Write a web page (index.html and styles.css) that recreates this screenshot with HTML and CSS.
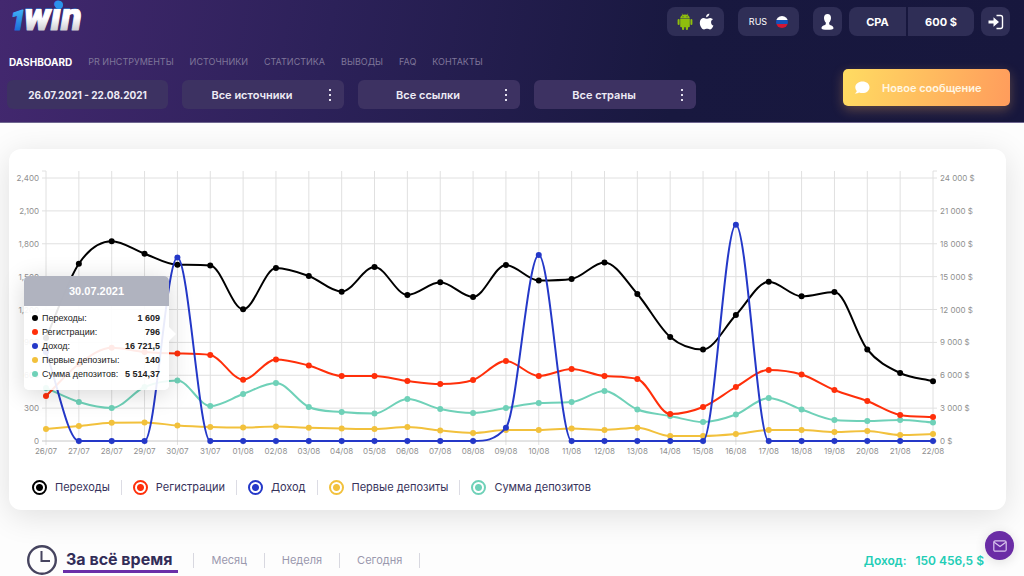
FILE: index.html
```html
<!DOCTYPE html>
<html lang="ru">
<head>
<meta charset="utf-8">
<meta name="viewport" content="width=device-width, initial-scale=1">
<title>1win Dashboard</title>
<link rel="stylesheet" href="styles.css">
</head>
<body>
<header class="header">
  <div class="header-row">
    <a class="logo" href="#" aria-label="1win">
      <svg width="80" height="36" viewBox="0 0 80 36">
        <defs>
          <linearGradient id="blue" gradientUnits="userSpaceOnUse" x1="0" y1="10" x2="0" y2="30"><stop offset="0" stop-color="#3fb0f7"/><stop offset="1" stop-color="#1b6fd8"/></linearGradient>
          <linearGradient id="white" gradientUnits="userSpaceOnUse" x1="0" y1="0" x2="0" y2="30"><stop offset=".29" stop-color="#2b93ea"/><stop offset=".29" stop-color="#ffffff"/><stop offset=".6" stop-color="#ffffff"/><stop offset="1" stop-color="#cfcfd4"/></linearGradient>
        </defs>
        <text class="logo-text" x="1" y="30" font-size="28" fill="url(#blue)" stroke="url(#blue)">1</text>
        <text class="logo-text" x="15" y="30" font-size="38" fill="url(#white)" stroke="url(#white)">win</text>
        <circle cx="50" cy="5" r="4" fill="#2b93ea"/>
      </svg>
    </a>
    <div class="tools">
      <button class="tool apps" aria-label="Приложения">
        <svg width="16" height="18" viewBox="0 0 16 18" fill="#8fbf0c"><path d="M3.2 6h9.6v7.2a1 1 0 0 1-1 1H4.200a1 1 0 0 1-1-1z"/><path d="M3.200 5.400C3.300 3.600 4.400 2.500 5.500 2L4.700.6l.4-.2.9 1.400a5.600 5.600 0 0 1 4 0L10.900.4l.4.2-.8 1.400c1.100.5 2.200 1.600 2.300 3.400z"/><rect x=".6" y="6" width="2" height="6" rx="1"/><rect x="13.400" y="6" width="2" height="6" rx="1"/><rect x="5" y="12" width="2.200" height="5" rx="1.100"/><rect x="8.800" y="12" width="2.200" height="5" rx="1.100"/><circle cx="6" cy="3.800" r=".5" fill="#2f2f57"/><circle cx="10" cy="3.800" r=".5" fill="#2f2f57"/></svg>
        <svg width="15" height="18" viewBox="0 0 15 18" fill="#fff"><path d="M10.300.4c.1 1-.3 2-.9 2.700-.6.7-1.500 1.200-2.300 1.100-.1-1 .3-1.900.9-2.600C8.600.9 9.600.5 10.300.4zM13.900 6.300c-1.300.8-1.900 1.800-1.800 3.100 0 1.500.9 2.600 2.300 3.200-.5 1.400-1.700 3.800-3.200 3.900-1.200.1-1.600-.7-3.100-.7s-1.900.7-3.100.7C3 16.400.8 13 .8 9.700.8 6.600 2.700 4.900 4.700 4.900c1.200 0 2.300.8 3.100.8.700 0 2-.9 3.500-.8 1 .1 1.900.5 2.600 1.400z"/></svg>
      </button>
      <button class="tool lang">RUS
        <svg width="12" height="12" viewBox="0 0 12 12"><clipPath id="flag"><circle cx="6" cy="6" r="6"/></clipPath><g clip-path="url(#flag)"><path fill="#fff" d="M0 0h12v4H0z"/><path fill="#1553b8" d="M0 4h12v4H0z"/><path fill="#d41632" d="M0 8h12v4H0z"/></g></svg>
      </button>
      <button class="tool icon" aria-label="Профиль">
        <svg width="13" height="16" viewBox="0 0 13 16" fill="#fff"><path d="M6.500 0C4.300 0 3 1.600 3 4c0 1.800.8 3.600 1.800 4.500v1.700C4.400 11.200.5 11.200.5 14.200c0 1 2.500 1.600 6 1.600s6-.6 6-1.600c0-3-3.900-3-4.300-4V8.500C9.200 7.600 10 5.800 10 4c0-2.400-1.300-4-3.500-4z"/></svg>
      </button>
      <div class="pair"><button class="tool cpa">CPA</button><button class="tool balance">600 $</button></div>
      <button class="tool icon" aria-label="Выйти">
        <svg width="16" height="16" viewBox="0 0 16 16"><path d="M8.500 1.500h4a2 2 0 0 1 2 2v9a2 2 0 0 1-2 2h-4" fill="none" stroke="#fff" stroke-width="1.400"/><path d="M.5 6.500h5V3.300L11 8l-5.500 4.700V9.500h-5z" fill="#fff"/></svg>
      </button>
    </div>
  </div>
  <div class="header-row lower">
    <div>
      <nav class="nav">
        <a class="nav-link active" href="#">DASHBOARD</a>
        <a class="nav-link" href="#">PR ИНСТРУМЕНТЫ</a>
        <a class="nav-link" href="#">ИСТОЧНИКИ</a>
        <a class="nav-link" href="#">СТАТИСТИКА</a>
        <a class="nav-link" href="#">ВЫВОДЫ</a>
        <a class="nav-link" href="#">FAQ</a>
        <a class="nav-link" href="#">КОНТАКТЫ</a>
      </nav>
      <div class="filters">
        <input class="field date" type="text" value="26.07.2021 - 22.08.2021" aria-label="Период">
        <label class="picker"><select class="field" aria-label="Источники"><option>Все источники</option></select><span class="dots"></span></label>
        <label class="picker"><select class="field" aria-label="Ссылки"><option>Все ссылки</option></select><span class="dots"></span></label>
        <label class="picker"><select class="field" aria-label="Страны"><option>Все страны</option></select><span class="dots"></span></label>
      </div>
    </div>
    <button class="message">
      <svg width="16" height="14" viewBox="0 0 16 14"><path d="M8.500.5C4.500.5 1.300 3 1.300 6.200c0 1.500.6 2.700 1.500 3.700-.3 1-1.100 1.900-2.100 2.600 1.600.2 3.200-.3 4.400-1 1 .4 2.200.6 3.400.6 4 0 7-2.600 7-5.900S12.500.5 8.500.5z" fill="#fff"/></svg>
      <span>Новое сообщение</span>
    </button>
  </div>
</header>

<main class="main">
  <section class="card">
    <div class="chart-box">
      <svg class="chart" id="chart" viewBox="0 0 997 316" role="img" aria-label="Статистика по дням"></svg>
      <div class="tooltip">
        <div class="tooltip-title">30.07.2021</div>
        <dl class="tooltip-list">
          <div class="tooltip-row black"><dt>Переходы:</dt><dd>1 609</dd></div>
          <div class="tooltip-row red"><dt>Регистрации:</dt><dd>796</dd></div>
          <div class="tooltip-row blue"><dt>Доход:</dt><dd>16 721,5</dd></div>
          <div class="tooltip-row yellow"><dt>Первые депозиты:</dt><dd>140</dd></div>
          <div class="tooltip-row teal"><dt>Сумма депозитов:</dt><dd>5 514,37</dd></div>
        </dl>
      </div>
    </div>
    <div class="legend">
      <label class="legend-item black"><input type="checkbox" checked>Переходы</label>
      <label class="legend-item red"><input type="checkbox" checked>Регистрации</label>
      <label class="legend-item blue"><input type="checkbox" checked>Доход</label>
      <label class="legend-item yellow"><input type="checkbox" checked>Первые депозиты</label>
      <label class="legend-item teal"><input type="checkbox" checked>Сумма депозитов</label>
    </div>
  </section>

  <section class="summary">
    <svg class="clock" width="30" height="30" viewBox="0 0 30 30" fill="none" stroke="#46445f"><circle cx="15" cy="15" r="13.800" stroke-width="2.400"/><path d="M14.500 6v10h8.500" stroke-width="2"/></svg>
    <div class="periods">
      <button class="period current">За всё время</button>
      <button class="period">Месяц</button>
      <button class="period">Неделя</button>
      <button class="period">Сегодня</button>
    </div>
    <p class="income"><span>Доход:</span><span>150 456,5 $</span></p>
  </section>
</main>

<button class="mail" aria-label="Написать">
  <svg width="14" height="12" viewBox="0 0 14 12" fill="none" stroke="#d9c5ee" stroke-width="1.200"><rect x=".8" y=".8" width="12.400" height="10.400" rx="1.500"/><path d="M1.200 2.200 7 6.600l5.800-4.400"/></svg>
</button>
<script src="chart.js"></script>
</body>
</html>
```

FILE: styles.css
```css
* { box-sizing: border-box; }

body {
  margin: 0;
  background: #fdfdfd;
  color: #37335c;
  font-family: Inter, "Open Sans", sans-serif;
  font-size: 11px;
}

button, input, select { font: inherit; color: inherit; border: 0; margin: 0; padding: 0; background: none; }
a { color: inherit; text-decoration: none; }
svg { display: block; flex: none; }

.black { --tone: #000000; }
.red { --tone: #ff2f0a; }
.blue { --tone: #2438c8; }
.yellow { --tone: #f2c13c; }
.teal { --tone: #6fd1b8; }

.header {
  padding: 0 14px 13px 7px;
  color: #fff;
  background: linear-gradient(100deg, #43286f 0%, #2c2159 32%, #18183f 66%, #17173d 100%);
  border-bottom: 1px solid #6f6790;
}
.header-row { display: flex; justify-content: space-between; }
.header-row.lower { align-items: flex-end; margin-top: 19px; }
.logo { margin-left: 2px; }
.logo svg { overflow: visible; }
.logo-text {
  font-family: Roboto, sans-serif;
  font-weight: 900;
  font-style: italic;
  stroke-width: 1px;
  stroke-linejoin: round;
}

.nav { display: flex; gap: 16px; margin: 0 0 11px 2px; line-height: 14px; font-size: 9px; }
.nav-link { color: #7f7699; }
.nav-link.active { color: #fff; font-size: 10px; font-weight: 700; }

.filters { display: flex; gap: 14px; }
.field {
  width: 162px;
  height: 29px;
  border-radius: 6px;
  background: #3d3262;
  color: #eeebf5;
  font-weight: 600;
  text-align: center;
  text-align-last: center;
  appearance: none;
}
.date { width: 161px; font-size: 10px; font-weight: 700; }
.picker { position: relative; }
.picker .field { display: block; padding-right: 22px; }
.dots {
  position: absolute;
  right: 13px;
  top: 9px;
  width: 2px;
  height: 2px;
  background: #e4e0ee;
  box-shadow: 0 5px #e4e0ee, 0 10px #e4e0ee;
}

.tools { display: flex; padding-top: 7px; }
.tool {
  display: flex;
  align-items: center;
  justify-content: center;
  height: 29px;
  border-radius: 8px;
  background: #2f2e56;
  font-weight: 700;
}
.apps { width: 57px; gap: 6px; margin-right: 14px; }
.lang { width: 61px; gap: 9px; margin-right: 14px; font-size: 9px; font-weight: 400; }
.icon { width: 29px; }
.pair { display: flex; gap: 2px; margin: 0 7px; }
.cpa { width: 57px; border-radius: 8px 0 0 8px; }
.balance { width: 66px; border-radius: 0 8px 8px 0; }
.message {
  display: flex;
  align-items: center;
  gap: 12px;
  width: 167px;
  height: 37px;
  margin-bottom: 3px;
  padding-left: 11px;
  border-radius: 5px;
  color: #fff6e2;
  font-weight: 600;
  background: linear-gradient(100deg, #ffdc62, #ff9c5c);
  box-shadow: 0 4px 12px rgba(255, 180, 90, .3);
}

.main { padding: 26px 18px 0 9px; }
.card {
  border-radius: 12px;
  background: #fff;
  box-shadow: 0 6px 32px rgba(0, 0, 0, .12);
}
.chart-box { position: relative; }
.chart { width: 100%; }
.chart text { fill: #8f8f8f; font-size: 8px; }
.grid { stroke: #e0e0e0; fill: none; }
.base { stroke: #c8c8c8; }
.line { fill: none; stroke: var(--tone); stroke-width: 2; }
.dot { fill: var(--tone); }

.tooltip {
  position: absolute;
  left: 15px;
  top: 127px;
  width: 145px;
  border-radius: 5px;
  background: rgba(255, 255, 255, .9);
  box-shadow: 0 4px 24px rgba(0, 0, 0, .16);
  color: #222;
  font: 9px/14px "Liberation Sans", sans-serif;
}
.tooltip::after {
  content: "";
  position: absolute;
  left: 100%;
  top: 51px;
  border: 7px solid transparent;
  border-left-color: #fff;
  border-right: 0;
}
.tooltip-title {
  border-radius: 5px 5px 0 0;
  background: rgba(172, 175, 188, .95);
  color: #fff;
  font-size: 11px;
  font-weight: 700;
  line-height: 30px;
  text-align: center;
}
.tooltip-list { margin: 0; padding: 5px 9px 9px 8px; }
.tooltip-row { display: flex; align-items: center; }
.tooltip-row::before { content: ""; width: 6px; height: 6px; margin-right: 4px; border-radius: 50%; background: var(--tone); }
.tooltip-row dd { margin: 0 0 0 auto; font-weight: 700; }

.legend { display: flex; padding: 15px 23px; }
.legend-item { display: flex; align-items: center; gap: 8px; line-height: 15px; }
.legend-item + .legend-item { margin-left: 11px; padding-left: 11px; border-left: 1px solid #dcdce4; }
.legend-item input {
  appearance: none;
  width: 15px;
  height: 15px;
  border: 2px solid var(--tone);
  border-radius: 50%;
  background: radial-gradient(circle, var(--tone) 3px, transparent 4px);
}

.summary { display: flex; align-items: center; padding: 35px 22px 0 18px; }
.periods { display: flex; align-items: center; margin-left: 6px; }
.period { height: 15px; padding: 0 17px; color: #9a98ad; border-right: 1px solid #d8d8e0; }
.period.current {
  height: 26px;
  margin-right: 15px;
  padding: 0 6px 0 3px;
  border-right: 0;
  border-bottom: 3px solid #6a2fa8;
  color: #322d58;
  font-size: 16px;
  font-weight: 700;
}
.period.current + .period { border-left: 1px solid #d8d8e0; }
.income { display: flex; gap: 9px; margin: 0 0 0 auto; color: #22cdb6; font-size: 12px; font-weight: 600; }

.mail {
  position: fixed;
  right: 10px;
  bottom: 16px;
  display: grid;
  place-items: center;
  width: 29px;
  height: 29px;
  border-radius: 50%;
  background: #6a2ca5;
  box-shadow: 0 2px 12px rgba(0, 0, 0, .12);
}
```

FILE: chart.js
```js
const LEFT = 37, RIGHT = 924, TOP = 29, BASE = 292, HEAD = 22, COUNT = 28;
const step = (RIGHT - LEFT) / (COUNT - 1);

// Heights above the zero line, in drawing units, one per day.
const series = [
  ["teal", [53,39,33,54,60.5,35,47,58,34,29,27.5,42,32,28,33,38,39,50,31.5,25,19,26.5,43,31.5,21,20,21,18.5]],
  ["yellow", [12,15,18.3,18.5,15.5,14,13.5,14.5,13.3,12.5,12,14,10.5,8,11,11,12.5,11,13.3,5,5,7,11,11,9,10,6,7]],
  ["red", [45,77,93.3,89,87.5,86,61.3,81.5,75.5,65,65,60,57,61,80,65,72,65,62,27,34,54,71,66.5,51,40,26,24]],
  ["black", [103,177.3,199.7,187.3,176.3,175.5,131.7,173,165,149.3,174,146,158.7,144,176,160.5,162,178.5,147,104,91.5,126,159.3,144.7,149,91.5,68,59.7]],
  ["blue", [89,0,0,0,183.5,0,0,0,0,0,0,0,0,0,13.3,186,0,0,0,0,0,216.3,0,0,0,0,0,0]]
];

// Monotone cubic curve through equally spaced points.
function curve(values) {
  const n = values.length;
  const d = values.slice(1).map((v, i) => v - values[i]);
  const m = values.map((_, i) => {
    if (i === 0) return d[0];
    if (i === n - 1) return d[n - 2];
    return d[i - 1] * d[i] <= 0 ? 0 : (d[i - 1] + d[i]) / 2;
  });
  d.forEach((s, i) => {
    if (s === 0) { m[i] = m[i + 1] = 0; return; }
    const a = m[i] / s, b = m[i + 1] / s, r = a * a + b * b;
    if (r > 9) { const t = 3 / Math.sqrt(r); m[i] = t * a * s; m[i + 1] = t * b * s; }
  });
  let path = `M${LEFT} ${BASE - values[0]}`;
  for (let i = 1; i < n; i++) {
    const x0 = LEFT + (i - 1) * step, x1 = x0 + step;
    path += `C${x0 + step / 3} ${BASE - values[i - 1] - m[i - 1] / 3} ${x1 - step / 3} ${BASE - values[i] + m[i] / 3} ${x1} ${BASE - values[i]}`;
  }
  return path;
}

let out = "";
for (let i = 0; i < COUNT; i++) {
  const x = LEFT + i * step;
  const date = new Date(2021, 6, 26 + i);
  const label = String(date.getDate()).padStart(2, "0") + "/" + String(date.getMonth() + 1).padStart(2, "0");
  out += `<path class="grid" d="M${x} ${HEAD}V${BASE + 4}"/><text x="${x}" y="305" text-anchor="middle">${label}</text>`;
}
for (let k = 0; k <= 8; k++) {
  const y = BASE - k * (BASE - TOP) / 8;
  const group = (v, sep) => String(v).replace(/\B(?=(\d{3})+$)/g, sep);
  out += `<path class="grid${k ? "" : " base"}" d="M${LEFT - 4} ${y}H${RIGHT + 4}"/>`;
  out += `<text x="30" y="${y + 3}" text-anchor="end">${group(k * 300, ",")}</text>`;
  out += `<text x="931" y="${y + 3}">${group(k * 3000, " ")} $</text>`;
}
out += `<path class="grid" d="M${LEFT - 4} ${HEAD}H${LEFT}M${RIGHT} ${HEAD}H${RIGHT + 4}"/>`;
for (const [name, values] of series) {
  out += `<g class="${name}"><path class="line" d="${curve(values)}"/>`;
  values.forEach((v, i) => { out += `<circle class="dot" cx="${LEFT + i * step}" cy="${BASE - v}" r="3"/>`; });
  out += "</g>";
}
document.getElementById("chart").innerHTML = out;
```
